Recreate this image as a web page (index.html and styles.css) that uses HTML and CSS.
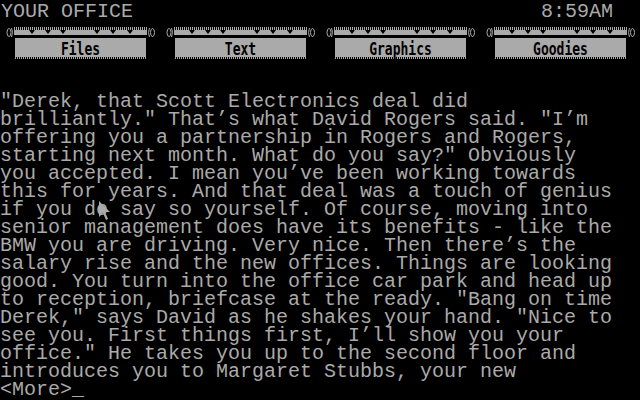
FILE: index.html
```html
<!DOCTYPE html>
<html>
<head>
<meta charset="utf-8">
<title>Your Office</title>
<link rel="stylesheet" href="styles.css">
</head>
<body>
<div class="screen">
  <header class="top">
    <span class="title">YOUR OFFICE</span>
    <span class="clock">8:59AM</span>
  </header>

  <nav class="menu">
    <div class="item">
      <svg class="orn" width="8" height="11" viewBox="0 0 8 11"><ellipse cx="3" cy="5.5" rx="2" ry="4" fill="none" stroke="#aaa" stroke-width="1"/><path d="M5.5 1 Q7.5 5.5 5.5 10" fill="none" stroke="#aaa" stroke-width="1"/></svg>
      <div class="mid">
        <svg class="strip" width="133" height="10" viewBox="0 0 133 10">
          <rect x="0" y="0" width="133" height="3" fill="url(#comb)"/>
          <rect x="0" y="3" width="133" height="5" fill="#aaa"/>
          <g fill="#000"><path d="M15 3h6l-3 4z"/><path d="M31 3h6l-3 4z"/><path d="M46 3h6l-3 4z"/><path d="M80 3h6l-3 4z"/><path d="M96 3h6l-3 4z"/><path d="M113 3h6l-3 4z"/></g>
          <defs><pattern id="comb" width="2" height="3" patternUnits="userSpaceOnUse"><rect x="0" y="0" width="1" height="3" fill="#aaa"/></pattern></defs>
        </svg>
        <div class="btn"><span class="label">Files</span></div>
      </div>
      <svg class="orn" width="9" height="11" viewBox="0 0 9 11"><path d="M2.5 1 Q0.5 5.5 2.5 10" fill="none" stroke="#aaa" stroke-width="1"/><ellipse cx="5.5" cy="5.5" rx="2" ry="4" fill="none" stroke="#aaa" stroke-width="1"/></svg>
    </div>

    <div class="item">
      <svg class="orn" width="8" height="11" viewBox="0 0 8 11"><ellipse cx="3" cy="5.5" rx="2" ry="4" fill="none" stroke="#aaa" stroke-width="1"/><path d="M5.5 1 Q7.5 5.5 5.5 10" fill="none" stroke="#aaa" stroke-width="1"/></svg>
      <div class="mid">
        <svg class="strip" width="133" height="10" viewBox="0 0 133 10">
          <rect x="0" y="0" width="133" height="3" fill="url(#comb)"/>
          <rect x="0" y="3" width="133" height="5" fill="#aaa"/>
          <g fill="#000"><path d="M15 3h6l-3 4z"/><path d="M31 3h6l-3 4z"/><path d="M46 3h6l-3 4z"/><path d="M80 3h6l-3 4z"/><path d="M96 3h6l-3 4z"/><path d="M113 3h6l-3 4z"/></g>
        </svg>
        <div class="btn"><span class="label">Text</span></div>
      </div>
      <svg class="orn" width="9" height="11" viewBox="0 0 9 11"><path d="M2.5 1 Q0.5 5.5 2.5 10" fill="none" stroke="#aaa" stroke-width="1"/><ellipse cx="5.5" cy="5.5" rx="2" ry="4" fill="none" stroke="#aaa" stroke-width="1"/></svg>
    </div>

    <div class="item">
      <svg class="orn" width="8" height="11" viewBox="0 0 8 11"><ellipse cx="3" cy="5.5" rx="2" ry="4" fill="none" stroke="#aaa" stroke-width="1"/><path d="M5.5 1 Q7.5 5.5 5.5 10" fill="none" stroke="#aaa" stroke-width="1"/></svg>
      <div class="mid">
        <svg class="strip" width="133" height="10" viewBox="0 0 133 10">
          <rect x="0" y="0" width="133" height="3" fill="url(#comb)"/>
          <rect x="0" y="3" width="133" height="5" fill="#aaa"/>
          <g fill="#000"><path d="M15 3h6l-3 4z"/><path d="M31 3h6l-3 4z"/><path d="M46 3h6l-3 4z"/><path d="M80 3h6l-3 4z"/><path d="M96 3h6l-3 4z"/><path d="M113 3h6l-3 4z"/></g>
        </svg>
        <div class="btn"><span class="label">Graphics</span></div>
      </div>
      <svg class="orn" width="9" height="11" viewBox="0 0 9 11"><path d="M2.5 1 Q0.5 5.5 2.5 10" fill="none" stroke="#aaa" stroke-width="1"/><ellipse cx="5.5" cy="5.5" rx="2" ry="4" fill="none" stroke="#aaa" stroke-width="1"/></svg>
    </div>

    <div class="item">
      <svg class="orn" width="8" height="11" viewBox="0 0 8 11"><ellipse cx="3" cy="5.5" rx="2" ry="4" fill="none" stroke="#aaa" stroke-width="1"/><path d="M5.5 1 Q7.5 5.5 5.5 10" fill="none" stroke="#aaa" stroke-width="1"/></svg>
      <div class="mid">
        <svg class="strip" width="133" height="10" viewBox="0 0 133 10">
          <rect x="0" y="0" width="133" height="3" fill="url(#comb)"/>
          <rect x="0" y="3" width="133" height="5" fill="#aaa"/>
          <g fill="#000"><path d="M15 3h6l-3 4z"/><path d="M31 3h6l-3 4z"/><path d="M46 3h6l-3 4z"/><path d="M80 3h6l-3 4z"/><path d="M96 3h6l-3 4z"/><path d="M113 3h6l-3 4z"/></g>
        </svg>
        <div class="btn"><span class="label">Goodies</span></div>
      </div>
      <svg class="orn" width="9" height="11" viewBox="0 0 9 11"><path d="M2.5 1 Q0.5 5.5 2.5 10" fill="none" stroke="#aaa" stroke-width="1"/><ellipse cx="5.5" cy="5.5" rx="2" ry="4" fill="none" stroke="#aaa" stroke-width="1"/></svg>
    </div>
  </nav>

<pre class="story">"Derek, that Scott Electronics deal did
brilliantly." That’s what David Rogers said. "I’m
offering you a partnership in Rogers and Rogers,
starting next month. What do you say?" Obviously
you accepted. I mean you’ve been working towards
this for years. And that deal was a touch of genius
if you do say so yourself. Of course, moving into
senior management does have its benefits - like the
BMW you are driving. Very nice. Then there’s the
salary rise and the new offices. Things are looking
good. You turn into the office car park and head up
to reception, briefcase at the ready. "Bang on time
Derek," says David as he shakes your hand. "Nice to
see you. First things first, I’ll show you your
office." He takes you up to the second floor and
introduces you to Margaret Stubbs, your new
&lt;More&gt;_</pre>

  <svg class="pointer" width="13" height="21" viewBox="0 0 13 21">
    <path d="M0 0 L0 16 L4 12 L7 19 L9 18 L6 11 L11 11 Z" fill="#aaa"/>
  </svg>
</div>
</body>
</html>
```

FILE: styles.css
```css
html, body {
  margin: 0;
  padding: 0;
  background: #000;
}

.screen {
  position: relative;
  width: 640px;
  height: 400px;
  overflow: hidden;
  background: #000;
  color: #aaa;
  font-family: "Liberation Mono", "DejaVu Sans Mono", monospace;
  font-size: 20px;
}

.top {
  display: flex;
  justify-content: space-between;
  padding: 2px 27px 0 1px;
  line-height: 20px;
  height: 22px;
  box-sizing: border-box;
}

.menu {
  display: flex;
  gap: 10px;
  padding-left: 6px;
  margin-top: 5px;
  height: 33px;
}

.item {
  display: flex;
  align-items: flex-start;
  width: 150px;
}

.orn {
  display: block;
  flex: none;
}

.mid {
  display: flex;
  flex-direction: column;
  width: 133px;
}

.strip {
  display: block;
}

.btn {
  margin: 1px 1px 0 1px;
  height: 21px;
  background:
    repeating-linear-gradient(90deg, #aaa 0 1px, #000 1px 2px) bottom / 100% 2px no-repeat,
    #aaa;
  display: flex;
  align-items: center;
  justify-content: center;
  padding-bottom: 1px;
  box-sizing: border-box;
}

.label {
  display: inline-block;
  color: #000;
  font-family: "DejaVu Sans Mono", "Liberation Mono", monospace;
  font-weight: bold;
  font-size: 13px;
  line-height: 13px;
  transform: scaleY(1.35);
}

.story {
  display: inline-block;
  margin: 33px 0 0 0;
  font-family: inherit;
  font-size: 20px;
  line-height: 18px;
  color: #aaa;
  white-space: pre;
}

.pointer {
  position: absolute;
  left: 99px;
  top: 201px;
}
```
